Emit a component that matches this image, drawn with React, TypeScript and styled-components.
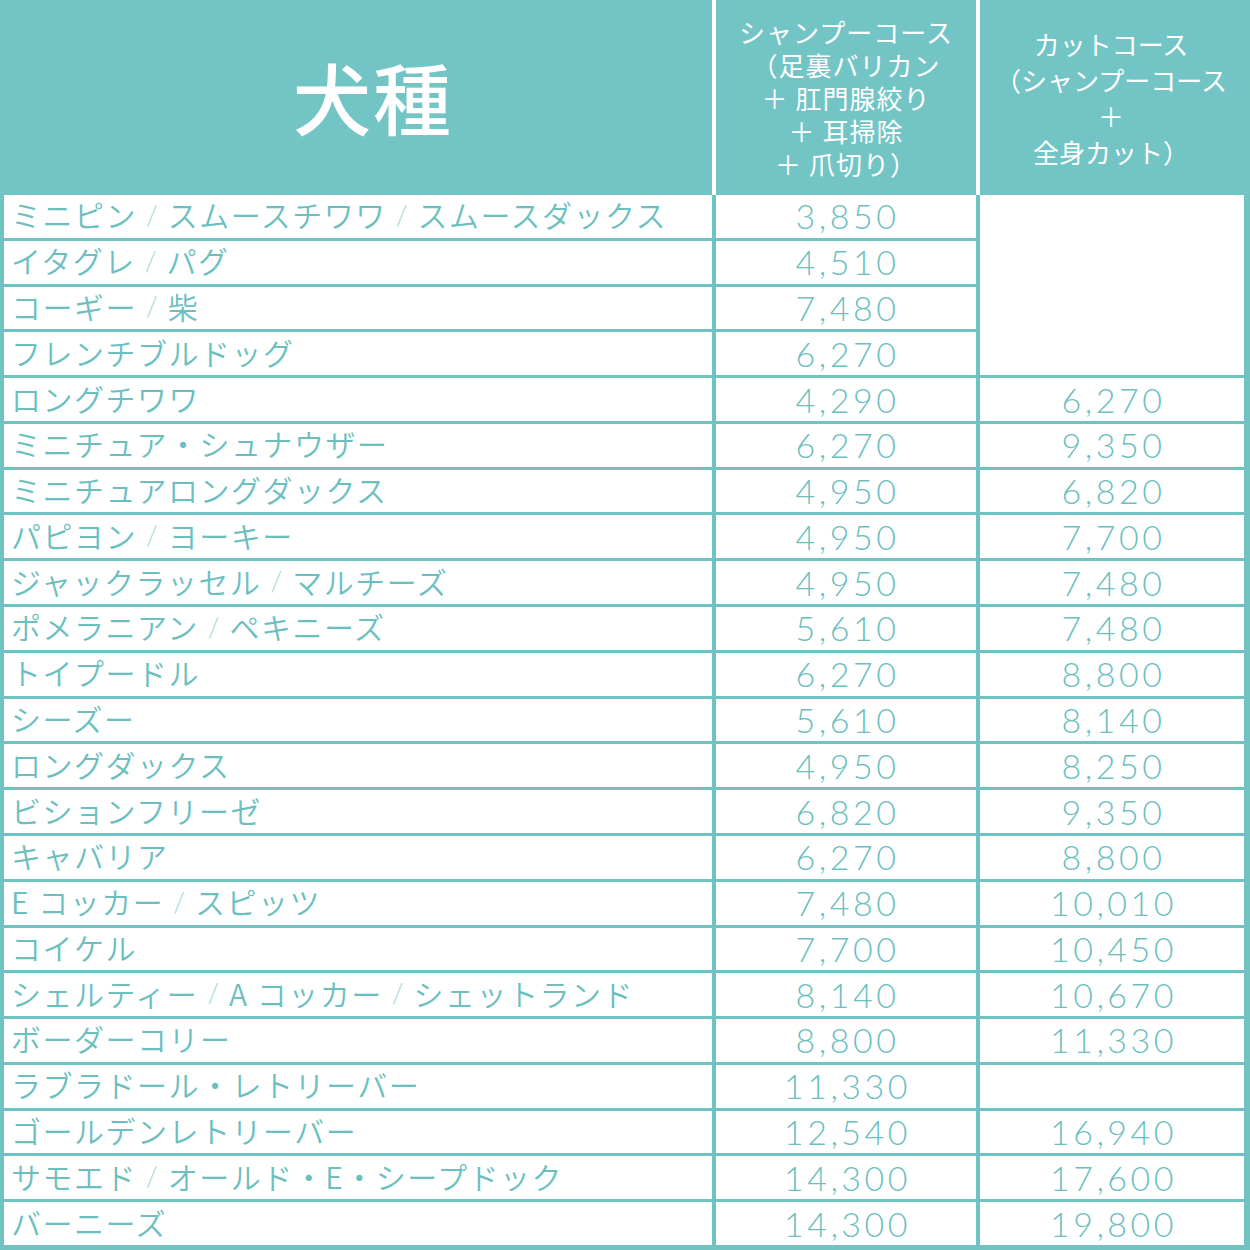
import React from "react";
import styled, { createGlobalStyle } from "styled-components";

const TEAL = "#73c5c5";
const LINE = "#70c3c3";
const TEXT = "#6cbfbf";

const GlobalStyle = createGlobalStyle`
  html, body {
    margin: 0;
    padding: 0;
    background: #ffffff;
  }
  * { box-sizing: border-box; }
`;

const Sheet = styled.div`
  width: 1250px;
  height: 1250px;
  background: ${LINE};
  padding: 0 6px 5px 4px;
  display: flex;
  flex-direction: column;
`;

const HeaderRow = styled.div`
  display: grid;
  grid-template-columns: 712px 260px 270px;
  column-gap: 4px;
  height: 195px;
  background: #ffffff;
  margin-left: -4px;
  margin-right: -6px;
`;

const HeadCell = styled.div<{ $lh?: number; $ls?: number; $pr?: number }>`
  background: ${TEAL};
  color: #ffffff;
  display: flex;
  align-items: center;
  justify-content: center;
  text-align: center;
  font-family: "Noto Sans CJK JP", "Noto Sans", sans-serif;
  font-size: 26px;
  font-weight: 400;
  line-height: ${(p) => p.$lh ?? 33}px;
  letter-spacing: ${(p) => p.$ls ?? 0}px;
  padding-right: ${(p) => p.$pr ?? 0}px;
  white-space: pre-line;
`;

const BigTitle = styled(HeadCell)`
  font-size: 78px;
  font-weight: 500;
  line-height: 1;
  letter-spacing: 2px;
  padding-left: 34px;
  padding-bottom: 4px;
`;

const Body = styled.div`
  display: grid;
  grid-template-columns: 708px 260px 264px;
  grid-template-rows: repeat(23, 1fr);
  column-gap: 4px;
  row-gap: 3px;
  height: 1050px;
  background: ${LINE};
`;

const NameCell = styled.div`
  background: #ffffff;
  display: flex;
  align-items: center;
  padding-left: 7px;
  padding-bottom: 4px;
  color: ${TEXT};
  font-family: "Noto Sans CJK JP", "Noto Sans", sans-serif;
  font-weight: 350;
  font-size: 30px;
  letter-spacing: 1.5px;
  line-height: 1;
  white-space: nowrap;
`;

const Sep = styled.span`
  display: inline-block;
  margin: 0 10px 0 9px;
  color: #9fd6d6;
  font-family: "Lato", sans-serif;
  font-weight: 300;
  font-size: 27px;
  letter-spacing: 0;
`;

const PriceCell = styled.div<{ $span?: number }>`
  background: #ffffff;
  display: flex;
  align-items: center;
  justify-content: center;
  color: ${TEXT};
  font-family: "Lato", "Liberation Sans", sans-serif;
  font-weight: 300;
  font-size: 34px;
  letter-spacing: 3.5px;
  line-height: 1;
  padding-left: 3px;
  ${(p) => (p.$span ? `grid-row: span ${p.$span};` : "")}
`;

type Row = { name: string; shampoo: string; cut?: string | null };

const rows: Row[] = [
  { name: "ミニピン / スムースチワワ / スムースダックス", shampoo: "3,850", cut: null },
  { name: "イタグレ / パグ", shampoo: "4,510" },
  { name: "コーギー / 柴", shampoo: "7,480" },
  { name: "フレンチブルドッグ", shampoo: "6,270" },
  { name: "ロングチワワ", shampoo: "4,290", cut: "6,270" },
  { name: "ミニチュア・シュナウザー", shampoo: "6,270", cut: "9,350" },
  { name: "ミニチュアロングダックス", shampoo: "4,950", cut: "6,820" },
  { name: "パピヨン / ヨーキー", shampoo: "4,950", cut: "7,700" },
  { name: "ジャックラッセル / マルチーズ", shampoo: "4,950", cut: "7,480" },
  { name: "ポメラニアン / ペキニーズ", shampoo: "5,610", cut: "7,480" },
  { name: "トイプードル", shampoo: "6,270", cut: "8,800" },
  { name: "シーズー", shampoo: "5,610", cut: "8,140" },
  { name: "ロングダックス", shampoo: "4,950", cut: "8,250" },
  { name: "ビションフリーゼ", shampoo: "6,820", cut: "9,350" },
  { name: "キャバリア", shampoo: "6,270", cut: "8,800" },
  { name: "E コッカー / スピッツ", shampoo: "7,480", cut: "10,010" },
  { name: "コイケル", shampoo: "7,700", cut: "10,450" },
  { name: "シェルティー / A コッカー / シェットランド", shampoo: "8,140", cut: "10,670" },
  { name: "ボーダーコリー", shampoo: "8,800", cut: "11,330" },
  { name: "ラブラドール・レトリーバー", shampoo: "11,330", cut: "" },
  { name: "ゴールデンレトリーバー", shampoo: "12,540", cut: "16,940" },
  { name: "サモエド / オールド・E・シープドック", shampoo: "14,300", cut: "17,600" },
  { name: "バーニーズ", shampoo: "14,300", cut: "19,800" },
];

function Name({ text }: { text: string }) {
  const parts = text.split(" / ");
  return (
    <NameCell>
      {parts.map((p, i) => (
        <React.Fragment key={i}>
          {i > 0 && <Sep>/</Sep>}
          {p}
        </React.Fragment>
      ))}
    </NameCell>
  );
}

export default function App() {
  return (
    <>
      <GlobalStyle />
      <Sheet>
        <HeaderRow>
          <BigTitle>犬種</BigTitle>
          <HeadCell $lh={33} $ls={1}>
            {"シャンプーコース\n（足裏バリカン\n＋ 肛門腺絞り\n＋ 耳掃除\n＋ 爪切り）"}
          </HeadCell>
          <HeadCell $lh={36} $ls={0} $pr={8}>
            {"カットコース\n（シャンプーコース\n＋\n全身カット）"}
          </HeadCell>
        </HeaderRow>
        <Body>
          {rows.map((r, i) => (
            <React.Fragment key={i}>
              <Name text={r.name} />
              <PriceCell>{r.shampoo}</PriceCell>
              {r.cut === null ? (
                <PriceCell $span={4} />
              ) : r.cut === undefined ? null : (
                <PriceCell>{r.cut}</PriceCell>
              )}
            </React.Fragment>
          ))}
        </Body>
      </Sheet>
    </>
  );
}
